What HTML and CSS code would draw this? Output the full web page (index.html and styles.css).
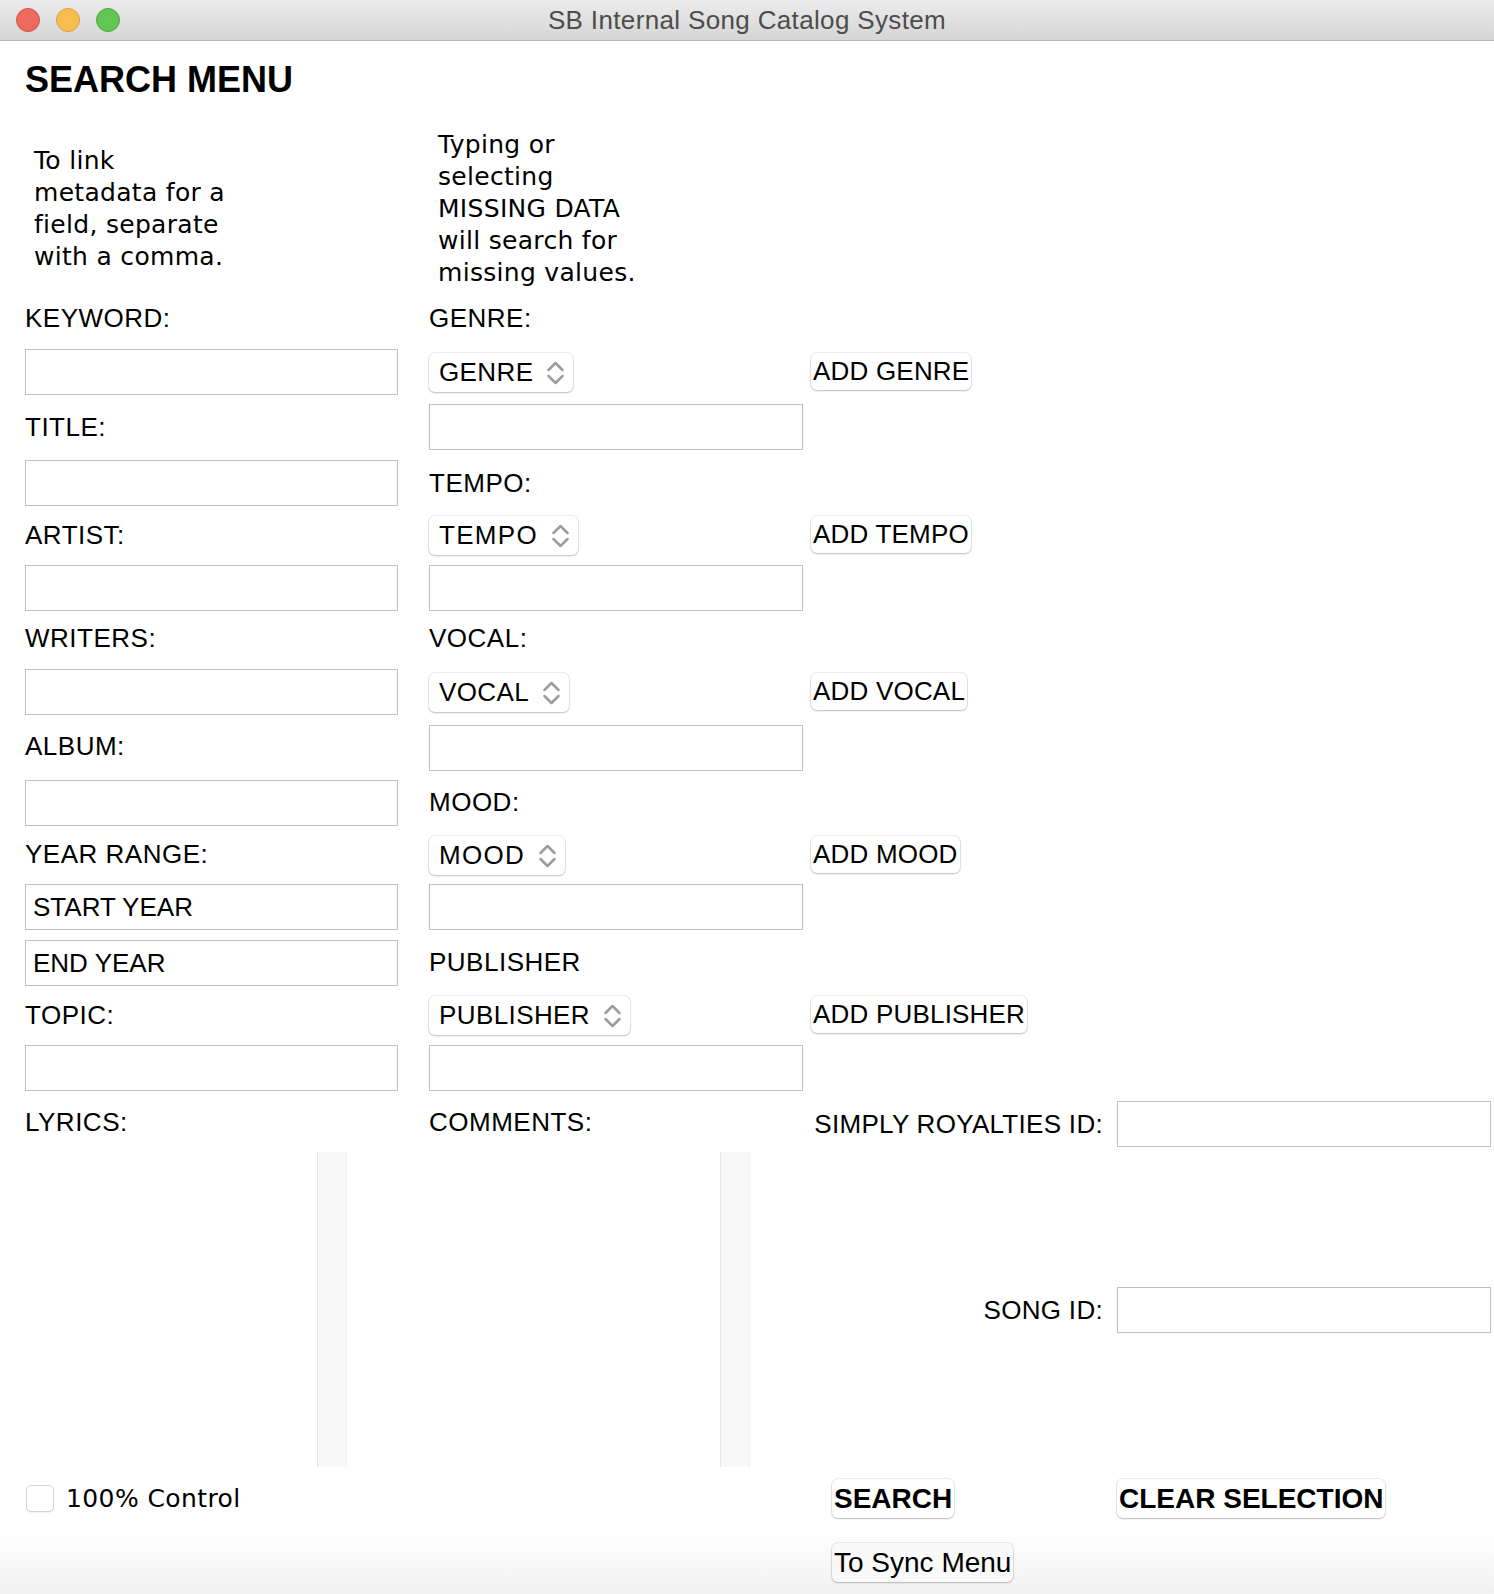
FILE: index.html
```html
<!DOCTYPE html>
<html lang="en">
<head>
<meta charset="utf-8">
<title>SB Internal Song Catalog System</title>
<link rel="stylesheet" href="styles.css">
</head>
<body>
<div class="window">
  <header class="titlebar">
    <div class="lights">
      <span class="light light-red"></span>
      <span class="light light-yellow"></span>
      <span class="light light-green"></span>
    </div>
    <div class="wtitle">SB Internal Song Catalog System</div>
  </header>

  <main class="content">
    <h1 class="heading">SEARCH MENU</h1>

    <div class="notes">
      <p class="note note-left">To link<br>metadata for a<br>field, separate<br>with a comma.</p>
      <p class="note note-right">Typing or<br>selecting<br>MISSING DATA<br>will search for<br>missing values.</p>
    </div>

    <div class="form">
      <div class="col col-left">
        <div class="label mt-14">KEYWORD:</div>
        <input class="field mt-16" type="text">
        <div class="label mt-17">TITLE:</div>
        <input class="field mt-18" type="text">
        <div class="label mt-14">ARTIST:</div>
        <input class="field mt-15" type="text">
        <div class="label mt-12">WRITERS:</div>
        <input class="field mt-16" type="text">
        <div class="label mt-16">ALBUM:</div>
        <input class="field mt-19" type="text">
        <div class="label mt-13">YEAR RANGE:</div>
        <input class="field mt-15" type="text" value="START YEAR">
        <input class="field mt-10" type="text" value="END YEAR">
        <div class="label mt-14">TOPIC:</div>
        <input class="field mt-15" type="text">
        <div class="label mt-16">LYRICS:</div>
        <div class="textarea textarea-lyrics mt-15">
          <div class="ta-body"></div>
          <div class="ta-scroll"></div>
        </div>
      </div>

      <div class="col col-main">
        <div class="label mt-14">GENRE:</div>
        <div class="ctrl mt-20">
          <div class="ctrl-cell">
            <div class="select"><span>GENRE</span><svg class="chev" width="17" height="24" viewBox="0 0 17 24"><polyline points="1.5,9 8.5,2 15.5,9"/><polyline points="1.5,15 8.5,22 15.5,15"/></svg></div>
          </div>
          <button class="btn btn-add">ADD GENRE</button>
        </div>
        <input class="field field-mid mt-12" type="text">

        <div class="label mt-18">TEMPO:</div>
        <div class="ctrl mt-18">
          <div class="ctrl-cell">
            <div class="select select-wide"><span>TEMPO</span><svg class="chev" width="17" height="24" viewBox="0 0 17 24"><polyline points="1.5,9 8.5,2 15.5,9"/><polyline points="1.5,15 8.5,22 15.5,15"/></svg></div>
          </div>
          <button class="btn btn-add">ADD TEMPO</button>
        </div>
        <input class="field field-mid mt-10" type="text">

        <div class="label mt-12">VOCAL:</div>
        <div class="ctrl mt-20">
          <div class="ctrl-cell">
            <div class="select"><span>VOCAL</span><svg class="chev" width="17" height="24" viewBox="0 0 17 24"><polyline points="1.5,9 8.5,2 15.5,9"/><polyline points="1.5,15 8.5,22 15.5,15"/></svg></div>
          </div>
          <button class="btn btn-add">ADD VOCAL</button>
        </div>
        <input class="field field-mid mt-13" type="text">

        <div class="label mt-16">MOOD:</div>
        <div class="ctrl mt-19">
          <div class="ctrl-cell">
            <div class="select select-wide"><span>MOOD</span><svg class="chev" width="17" height="24" viewBox="0 0 17 24"><polyline points="1.5,9 8.5,2 15.5,9"/><polyline points="1.5,15 8.5,22 15.5,15"/></svg></div>
          </div>
          <button class="btn btn-add">ADD MOOD</button>
        </div>
        <input class="field field-mid mt-9" type="text">

        <div class="label mt-17">PUBLISHER</div>
        <div class="ctrl mt-19">
          <div class="ctrl-cell">
            <div class="select"><span>PUBLISHER</span><svg class="chev" width="17" height="24" viewBox="0 0 17 24"><polyline points="1.5,9 8.5,2 15.5,9"/><polyline points="1.5,15 8.5,22 15.5,15"/></svg></div>
          </div>
          <button class="btn btn-add">ADD PUBLISHER</button>
        </div>
        <input class="field field-mid mt-10" type="text">

        <div class="lower mt-10">
          <div class="comments">
            <div class="label mt-6">COMMENTS:</div>
            <div class="textarea textarea-comments mt-15">
              <div class="ta-body"></div>
              <div class="ta-scroll"></div>
            </div>
          </div>
          <div class="ids">
            <div class="label id-label">SIMPLY ROYALTIES ID:</div>
            <input class="field field-id" type="text">
            <div class="label id-label">SONG ID:</div>
            <input class="field field-id" type="text">
          </div>
        </div>
      </div>
    </div>

    <div class="actions">
      <label class="check">
        <span class="checkbox"></span>
        <span class="check-text">100% Control</span>
      </label>
      <button class="btn btn-big btn-search">SEARCH</button>
      <button class="btn btn-big btn-clear">CLEAR SELECTION</button>
      <button class="btn btn-sync">To Sync Menu</button>
    </div>
  </main>
</div>
</body>
</html>
```

FILE: styles.css
```css
* {
  box-sizing: border-box;
}

html,
body {
  margin: 0;
  padding: 0;
}

body {
  width: 1494px;
  height: 1594px;
  overflow: hidden;
  font-family: "Liberation Sans", Arial, sans-serif;
  color: #000;
  background: #fff;
}

.window {
  width: 1494px;
  height: 1594px;
  background: linear-gradient(to bottom, #ffffff 0, #ffffff 1530px, #f1f1f1 1594px);
}

/* ---------- title bar ---------- */
.titlebar {
  position: relative;
  height: 41px;
  border-bottom: 1px solid #b6b6b6;
  background: linear-gradient(to bottom, #ececec, #d5d5d5);
  display: flex;
  align-items: center;
  justify-content: center;
}

.lights {
  position: absolute;
  left: 16px;
  top: 8px;
  display: flex;
  gap: 16px;
}

.light {
  width: 24px;
  height: 24px;
  border-radius: 50%;
  border: 1px solid;
}

.light-red {
  background: #ee6a5e;
  border-color: #d35348;
}

.light-yellow {
  background: #f6be4f;
  border-color: #d9a03a;
}

.light-green {
  background: #62c554;
  border-color: #4fa73f;
}

.wtitle {
  font-size: 26px;
  letter-spacing: 0.35px;
  line-height: 40px;
  color: #4d4d4d;
}

/* ---------- content ---------- */
.content {
  padding-left: 25px;
}

.heading {
  margin: 17px 0 0;
  font-size: 36px;
  line-height: 44px;
  font-weight: bold;
}

.notes {
  display: flex;
  align-items: center;
  margin-top: 27px;
  font-family: "DejaVu Sans", sans-serif;
  font-size: 25px;
  letter-spacing: 0.3px;
  line-height: 32px;
}

.note {
  margin: 0;
  padding-left: 9px;
}

.note-left {
  width: 404px;
}

.form {
  display: flex;
  gap: 31px;
}

.col {
  display: flex;
  flex-direction: column;
}

.col-left {
  width: 373px;
}

.col-main {
  flex: 1;
}

.label {
  font-size: 26px;
  letter-spacing: 0.5px;
  line-height: 30px;
  white-space: nowrap;
}

.field {
  display: block;
  width: 373px;
  height: 46px;
  margin-bottom: 0;
  border: 1px solid #bfbfbf;
  border-radius: 0;
  background: #fff;
  padding: 0 7px;
  font-family: "Liberation Sans", Arial, sans-serif;
  font-size: 26px;
  color: #000;
  outline: none;
}

.field-mid {
  width: 374px;
}

/* selects + add buttons */
.ctrl {
  display: flex;
  align-items: flex-start;
  gap: 8px;
}

.ctrl-cell {
  width: 374px;
  flex: none;
}

.select {
  display: inline-flex;
  align-items: center;
  gap: 14px;
  height: 39px;
  padding: 0 9px 0 10px;
  border-radius: 6px;
  background: #fff;
  box-shadow: 0 0 0 1px rgba(0, 0, 0, 0.07), 0 1px 2px rgba(0, 0, 0, 0.2);
  font-size: 26px;
  letter-spacing: 0.4px;
}

.select-wide {
  letter-spacing: 1.3px;
}

.chev {
  display: block;
  fill: none;
  stroke: #9d9d9d;
  stroke-width: 2.5;
  stroke-linecap: round;
  stroke-linejoin: round;
}

.btn {
  border: none;
  border-radius: 6px;
  background: #fff;
  box-shadow: 0 0 0 1px rgba(0, 0, 0, 0.07), 0 1px 2px rgba(0, 0, 0, 0.2);
  font-family: "Liberation Sans", Arial, sans-serif;
  color: #000;
  padding: 0 2px;
  cursor: default;
  white-space: nowrap;
}

.btn-add {
  height: 37px;
  font-size: 26px;
  letter-spacing: 0.2px;
}

/* textareas */
.textarea {
  display: flex;
  height: 315px;
  background: #fff;
}

.textarea-lyrics {
  width: 322px;
}

.textarea-comments {
  width: 321px;
}

.ta-body {
  flex: 1;
}

.ta-scroll {
  width: 30px;
  background: #f8f8f8;
  border-left: 1px solid #e4e4e4;
  border-right: 1px solid #efefef;
}

/* lower part of main column */
.lower {
  display: flex;
  gap: 8px;
}

.comments {
  width: 374px;
  flex: none;
  display: flex;
  flex-direction: column;
}

.ids {
  display: grid;
  grid-template-columns: 292px 374px;
  column-gap: 14px;
  row-gap: 140px;
  align-items: center;
  align-content: start;
}

.id-label {
  justify-self: end;
  letter-spacing: 0.3px;
}

.field-id {
  width: 374px;
}

/* bottom actions */
.actions {
  display: grid;
  grid-template-columns: 786px 306px 374px;
  grid-template-rows: 39px 39px;
  row-gap: 25px;
  margin-top: 12px;
  align-items: center;
}

.check {
  grid-column: 1;
  grid-row: 1;
  display: flex;
  align-items: center;
  gap: 12px;
  padding-left: 1px;
}

.checkbox {
  width: 28px;
  height: 27px;
  border-radius: 5px;
  background: #fff;
  border: 1px solid #d2d2d2;
  box-shadow: 0 1px 1px rgba(0, 0, 0, 0.06);
}

.check-text {
  font-family: "DejaVu Sans", sans-serif;
  font-size: 25px;
  letter-spacing: 0.4px;
}

.btn-big {
  height: 39px;
  font-size: 28px;
  font-weight: bold;
  justify-self: start;
}

.btn-search {
  grid-column: 2;
  grid-row: 1;
  margin-left: 21px;
}

.btn-clear {
  grid-column: 3;
  grid-row: 1;
}

.btn-sync {
  grid-column: 2;
  grid-row: 2;
  margin-left: 21px;
  justify-self: start;
  height: 39px;
  font-size: 28px;
  background: #f9f9f9;
}

/* spacing helpers */
.mt-6 { margin-top: 6px; }
.mt-9 { margin-top: 9px; }
.mt-10 { margin-top: 10px; }
.mt-12 { margin-top: 12px; }
.mt-13 { margin-top: 13px; }
.mt-14 { margin-top: 14px; }
.mt-15 { margin-top: 15px; }
.mt-16 { margin-top: 16px; }
.mt-17 { margin-top: 17px; }
.mt-18 { margin-top: 18px; }
.mt-19 { margin-top: 19px; }
.mt-20 { margin-top: 20px; }
```
